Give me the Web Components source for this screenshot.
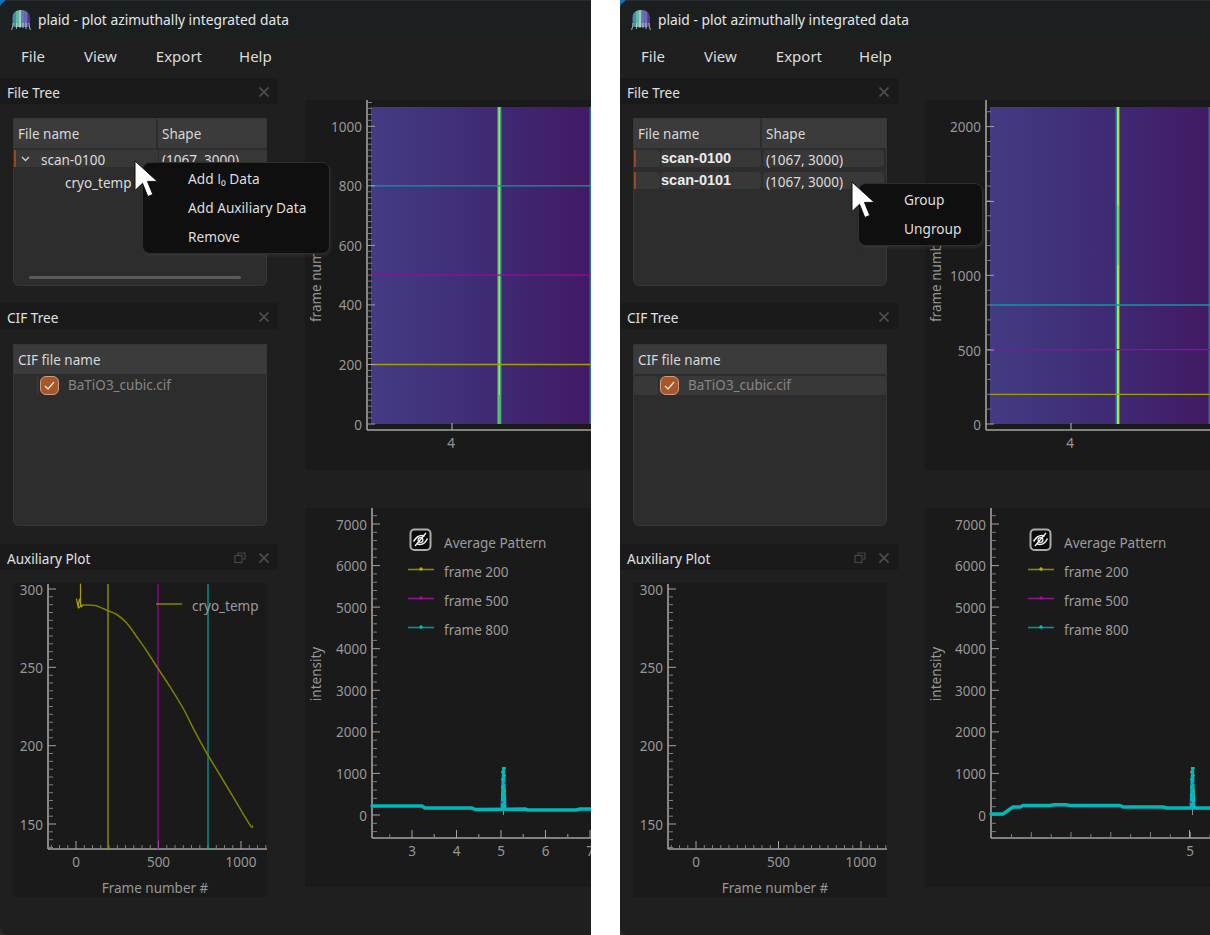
<!DOCTYPE html>
<html lang="en">
<head>
<meta charset="utf-8">
<title>plaid</title>
<style>
  html, body { margin: 0; height: 100%; background: #fff; overflow: hidden; }
  body { display: flex; gap: 29px; font-family: "Noto Sans", "Open Sans", sans-serif; }
</style>
</head>
<body>

<plaid-window style="width:591px">
  <plaid-dock slot="docks" title="File Tree" pad="14">
    <tree-view columns="File name|Shape" split="144">
      <tree-row accent chevron name="scan-0100" shape="(1067, 3000)"></tree-row>
      <tree-row child name="cryo_temp"></tree-row>
      <div slot="scroll" class="bar"></div>
    </tree-view>
  </plaid-dock>
  <plaid-dock slot="docks" title="CIF Tree" pad="15">
    <tree-view columns="CIF file name" height="182">
      <cif-row name="BaTiO3_cubic.cif"></cif-row>
    </tree-view>
  </plaid-dock>
  <plaid-dock slot="docks" title="Auxiliary Plot" floatable>
    <aux-plot data></aux-plot>
  </plaid-dock>
  <image-plot slot="plots" variant="first"></image-plot>
  <line-plot slot="plots" variant="first"></line-plot>
  <context-menu slot="overlay" items="Add I₀ Data|Add Auxiliary Data|Remove" style="left:142px;top:162px;width:188px"></context-menu>
  <mouse-cursor slot="overlay" style="left:134px;top:160px"></mouse-cursor>
</plaid-window>

<plaid-window style="width:590px">
  <plaid-dock slot="docks" title="File Tree" pad="14">
    <tree-view columns="File name|Shape" split="128">
      <tree-row accent segmented bold name="scan-0100" shape="(1067, 3000)"></tree-row>
      <tree-row accent segmented bold name="scan-0101" shape="(1067, 3000)"></tree-row>
    </tree-view>
  </plaid-dock>
  <plaid-dock slot="docks" title="CIF Tree" pad="15">
    <tree-view columns="CIF file name" height="182">
      <cif-row filled name="BaTiO3_cubic.cif"></cif-row>
    </tree-view>
  </plaid-dock>
  <plaid-dock slot="docks" title="Auxiliary Plot" floatable>
    <aux-plot></aux-plot>
  </plaid-dock>
  <image-plot slot="plots" variant="second"></image-plot>
  <line-plot slot="plots" variant="second"></line-plot>
  <context-menu slot="overlay" items="Group|Ungroup" style="left:238px;top:183px;width:125px"></context-menu>
  <mouse-cursor slot="overlay" style="left:231px;top:181px"></mouse-cursor>
</plaid-window>

<script>
const UI_FONT = `"Noto Sans", "Open Sans", sans-serif`;
const AXIS = "#a3a3a3";
const LABEL = "#979797";

// plot helpers, all coordinates are screen coordinates (the svg viewBox starts at the element's corner)
function line(x1, y1, x2, y2, color = AXIS, w = 1) {
  return `<line x1="${x1}" y1="${y1}" x2="${x2}" y2="${y2}" stroke="${color}" stroke-width="${w}"/>`;
}
function label(x, y, text, anchor = "middle", extra = "") {
  return `<text x="${x}" y="${y}" text-anchor="${anchor}" ${extra}>${text}</text>`;
}
function poly(points, color, w) {
  return `<polyline fill="none" stroke="${color}" stroke-width="${w}" stroke-linejoin="round" stroke-linecap="round" points="${points.map((p) => p.join(",")).join(" ")}"/>`;
}
// catmull-rom through the points, for the temperature curve
function smooth(points, color, w) {
  let d = `M${points[0].join(" ")}`;
  for (let i = 0; i < points.length - 1; i++) {
    const p0 = points[Math.max(i - 1, 0)];
    const p1 = points[i];
    const p2 = points[i + 1];
    const p3 = points[Math.min(i + 2, points.length - 1)];
    const c1 = [p1[0] + (p2[0] - p0[0]) / 6, p1[1] + (p2[1] - p0[1]) / 6];
    const c2 = [p2[0] - (p3[0] - p1[0]) / 6, p2[1] - (p3[1] - p1[1]) / 6];
    d += `C${c1[0].toFixed(1)} ${c1[1].toFixed(1)} ${c2[0].toFixed(1)} ${c2[1].toFixed(1)} ${p2[0]} ${p2[1]}`;
  }
  return `<path d="${d}" fill="none" stroke="${color}" stroke-width="${w}"/>`;
}
function yAxis({ x, top, bottom, y0, pxPerUnit, major, minor, base = 0 }) {
  let out = line(x, top, x, bottom, AXIS, 1.6);
  const lo = Math.ceil((y0 - bottom) / pxPerUnit / minor) * minor;
  for (let v = lo; y0 - v * pxPerUnit > top; v += minor) {
    const y = +(y0 - v * pxPerUnit).toFixed(1);
    if (y >= bottom - 1) continue;
    const value = v + base;
    const isMajor = value % major === 0;
    out += line(x, y, x + (isMajor ? 8 : 5), y, isMajor ? AXIS : "#7d7d7d", 1);
    if (isMajor && v >= 0) out += label(x - 5, y + 5.5, value, "end");
  }
  return out;
}
function pageBox(w, h) {
  return `width:${w}px;height:${h}px`;
}

class PlaidWindow extends HTMLElement {
  constructor() {
    super();
    this.attachShadow({ mode: "open" });
    this.shadowRoot.innerHTML = /*html*/ `
      <style>
        :host {
          display: block;
          position: relative;
          height: 935px;
          flex: none;
          background: linear-gradient(#1670b8, #1670b8) 0 0 / 5px 12px no-repeat, #2a2d30;
        }
        .frame {
          height: 934px;
          margin-top: 1px;
          display: flex;
          flex-direction: column;
          background: #1f1f1f;
          border-radius: 8px 0 0 8px;
          overflow: hidden;
          color: #e2e2e2;
          font: 14px ${UI_FONT};
        }
        .title {
          flex: none;
          height: 37px;
          display: flex;
          align-items: center;
          gap: 7px;
          padding-left: 11px;
          background: #1b1f20;
          color: #e4e6e6;
          font-size: 13.800px;
        }
        .title span { position: relative; top: -0.5px; }
        .menu {
          flex: none;
          height: 38px;
          display: flex;
          align-items: center;
          gap: 39px;
          padding: 0 0 3px 21px;
          box-sizing: border-box;
          font-size: 15px;
          color: #dcdcdc;
        }
        .menu span:last-child { margin-left: -2px; }
        .main { flex: 1; display: flex; min-height: 0; }
        .docks {
          flex: none;
          width: 278px;
          padding-top: 2px;
          display: grid;
          grid-template-rows: 225px 241px 1fr;
        }
        .plots {
          flex: 1;
          padding: 24px 0 0 27px;
          display: flex;
          flex-direction: column;
          gap: 38px;
          min-width: 0;
        }
      </style>
      <div class="frame">
        <div class="title">
          <svg width="20" height="22" viewBox="0 0 20 22">
            <defs><clipPath id="dome"><path d="M1 10C1 4 5 1 10 1s9 3 9 9c0 4-1 6-2 8H3c-1-2-2-4-2-8z"/></clipPath></defs>
            <g clip-path="url(#dome)">
              <rect width="20" height="19" fill="#37506e"/>
              <rect x="2" width="3" height="19" fill="#3f8fa8"/>
              <rect x="5" width="3" height="19" fill="#62b8a0"/>
              <rect x="8" width="2.500" height="19" fill="#a5c8b8"/>
              <rect x="10.500" width="3" height="19" fill="#5f78c4"/>
              <rect x="13.500" width="3" height="19" fill="#7a64b8"/>
              <rect x="16.500" width="3" height="19" fill="#4e3a8c"/>
            </g>
            <path d="M2 14c0 3-.5 5-1.500 7M5.500 14v6M9 14v5M12 14v5M15 14v6M18 14c0 3 .5 5 1.500 7" fill="none" stroke="#cfd6d0" stroke-opacity="0.700" stroke-width="1.200"/>
          </svg>
          <span>plaid - plot azimuthally integrated data</span>
        </div>
        <div class="menu"><span>File</span><span>View</span><span>Export</span><span>Help</span></div>
        <div class="main">
          <div class="docks"><slot name="docks"></slot></div>
          <div class="plots"><slot name="plots"></slot></div>
        </div>
      </div>
      <slot name="overlay"></slot>
    `;
  }
}

class PlaidDock extends HTMLElement {
  connectedCallback() {
    const pad = this.getAttribute("pad");
    const float = this.hasAttribute("floatable")
      ? `<svg class="float" width="12" height="12" viewBox="0 0 12 12" fill="none" stroke="#474747" stroke-width="1.200"><path d="M4 3V1h7v6H8.500"/><rect x="1" y="3.500" width="7" height="7"/></svg>`
      : "";
    this.attachShadow({ mode: "open" }).innerHTML = /*html*/ `
      <style>
        :host { display: block; min-height: 0; }
        .head {
          height: 26px;
          display: flex;
          align-items: center;
          padding: 2px 9px 0 7px;
          box-sizing: border-box;
          background: #1a1a1a;
          font-size: 13.600px;
          color: #e0e0e0;
        }
        .head span { flex: 1; }
        .float { margin-right: 13px; }
        .body { padding: ${pad ? pad + "px 11px 0 13px" : "0"}; }
      </style>
      <div class="head">
        <span>${this.getAttribute("title")}</span>
        ${float}
        <svg width="10" height="10" viewBox="0 0 10 10" stroke="#4c4c4c" stroke-width="1.800"><path d="M0.500 0.500l9 9M9.500 0.500l-9 9"/></svg>
      </div>
      <div class="body"><slot></slot></div>
    `;
    this.removeAttribute("title");
  }
}

class TreeView extends HTMLElement {
  connectedCallback() {
    const cols = this.getAttribute("columns").split("|");
    const split = this.getAttribute("split");
    this.attachShadow({ mode: "open" }).innerHTML = /*html*/ `
      <style>
        :host {
          display: block;
          position: relative;
          height: ${this.getAttribute("height") || 168}px;
          box-sizing: border-box;
          background: #2d2d2d;
          border: 1px solid #363636;
          border-radius: 0 0 6px 6px;
          overflow: hidden;
          --split: ${split || 0}px;
        }
        .header {
          height: 29px;
          display: flex;
          background: #3b3b3b;
          font-size: 13.500px;
          color: #d8d8d8;
          margin-bottom: 2px;
        }
        .header span { padding: 6px 0 0 4px; box-sizing: border-box; }
        .header span:not(:last-child) { width: var(--split); border-right: 2px solid #2d2d2d; flex: none; }
        .rows { display: flex; flex-direction: column; gap: 5px; }
        ::slotted(.bar) {
          position: absolute;
          left: 15px;
          bottom: 6px;
          width: 212px;
          height: 3px;
          border-radius: 2px;
          background: #5b5b5b;
        }
      </style>
      <div class="header">${cols.map((c) => `<span>${c}</span>`).join("")}</div>
      <div class="rows"><slot></slot></div>
      <slot name="scroll"></slot>
    `;
  }
}

class TreeRow extends HTMLElement {
  connectedCallback() {
    const name = this.getAttribute("name");
    const shape = this.getAttribute("shape") || "";
    const chevron = this.hasAttribute("chevron")
      ? `<svg width="9" height="6" viewBox="0 0 9 6" fill="none" stroke="#cfcfcf" stroke-width="1.300"><path d="M1 1l3.500 3.500L8 1"/></svg>`
      : "";
    this.attachShadow({ mode: "open" }).innerHTML = /*html*/ `
      <style>
        :host {
          display: grid;
          grid-template-columns: 26px calc(var(--split) - 26px) 1fr;
          height: 17px;
          line-height: 20px;
          font-size: 13.500px;
          color: #dcdcdc;
          white-space: nowrap;
        }
        .lead { display: flex; align-items: center; padding-left: 7px; box-sizing: border-box; height: 17px; }
        :host([accent]) .lead { border-left: 2px solid #94491f; padding-left: 5px; }
        .name { margin-left: -1px; height: 17px; }
        .shape { padding-left: 3px; margin-left: 1px; height: 17px; }
        :host([accent]:not([segmented])) .lead,
        :host([accent]:not([segmented])) .name,
        :host([accent]:not([segmented])) .shape { background: #383838; }
        :host([accent]:not([segmented])) .name { margin-left: 0; padding-left: 1px; }
        :host([segmented]) .lead { background: #383838; border-radius: 0 4px 4px 0; }
        :host([segmented]) .name { background: #383838; border-radius: 4px; margin: 0 1px 0 1px; }
        :host([segmented]) .shape { background: #383838; border-radius: 4px; margin-right: 2px; padding-left: 3px; }
        :host([bold]) .name {
          font-weight: 700;
          color: #ececec;
          font-family: "Liberation Sans", sans-serif;
          font-size: 14.500px;
          line-height: 17px;
        }
        :host([child]) .name { padding-left: 26px; position: relative; top: 1px; }
      </style>
      <div class="lead">${chevron}</div>
      <div class="name">${name}</div>
      <div class="shape">${shape}</div>
    `;
  }
}

class CifRow extends HTMLElement {
  connectedCallback() {
    this.attachShadow({ mode: "open" }).innerHTML = /*html*/ `
      <style>
        :host {
          display: flex;
          align-items: center;
          height: 20px;
          margin-top: -1px;
          font-size: 13.500px;
          color: #858585;
        }
        :host([filled]) .rest, :host([filled]) .lead { background: #383838; border-radius: 3px; }
        .lead { width: 23px; height: 19px; border-right: 1px solid #383838; flex: none; }
        .rest { flex: 1; display: flex; align-items: center; gap: 9px; padding-left: 1px; margin-left: 1px; height: 19px; }
        .box {
          width: 17px;
          height: 17px;
          flex: none;
          border: 1px solid #cf9e7f;
          border-radius: 6px;
          background: #a9562a;
          display: flex;
          align-items: center;
          justify-content: center;
        }
      </style>
      <div class="lead"></div>
      <div class="rest">
        <span class="box"><svg width="11" height="9" viewBox="0 0 11 9" fill="none" stroke="#f3e6dc" stroke-width="1.400"><path d="M1 5l3 3 6-7"/></svg></span>
        <span>${this.getAttribute("name")}</span>
      </div>
    `;
  }
}

class ContextMenu extends HTMLElement {
  connectedCallback() {
    const items = this.getAttribute("items").split("|");
    this.attachShadow({ mode: "open" }).innerHTML = /*html*/ `
      <style>
        :host {
          display: block;
          position: absolute;
          box-sizing: border-box;
          padding: 2px 0 1px;
          background: #0f0f0f;
          border: 1px solid #2e2e2e;
          border-radius: 8px;
          box-shadow: 1px 2px 3px rgba(70, 70, 70, 0.35);
          font-size: 13.700px;
          color: #dedede;
          z-index: 2;
        }
        div { height: 29px; line-height: 27px; padding-left: 45px; white-space: nowrap; }
        /* noto draws this I with serifs next to the subscript */
        .sub { font-family: "Open Sans", sans-serif; }
      </style>
      ${items.map((i) => `<div>${i.replace("I₀", '<span class="sub">I₀</span>')}</div>`).join("")}
    `;
  }
}

class MouseCursor extends HTMLElement {
  constructor() {
    super();
    this.attachShadow({ mode: "open" }).innerHTML = /*html*/ `
      <style>:host { display: block; position: absolute; width: 26px; height: 40px; z-index: 3; }</style>
      <svg width="26" height="40" viewBox="0 0 26 40">
        <path d="M1 1v29.500l7.500-7.200 5.300 13.200 5-2.100-5.300-13h9.800z" fill="#fff" stroke="#111" stroke-width="1"/>
      </svg>
    `;
  }
}

class ImagePlot extends HTMLElement {
  connectedCallback() {
    const first = this.getAttribute("variant") === "first";
    const ox = first ? 305 : 925;
    const w = first ? 286 : 285;
    const ax = first ? 367 : 986;
    const imgX = ax + 4;
    const peak = first ? 499 : 1118;
    const tick4 = first ? 452 : 1071;
    const right = ox + w;
    const pxPerUnit = first ? 0.2977 : 0.1487;
    const frame = (v) => +(424 - v * pxPerUnit).toFixed(1);
    const axis = yAxis({
      x: ax, top: 100, bottom: 430, y0: 424, pxPerUnit,
      major: first ? 200 : 1000, minor: first ? 20 : 100,
    });
    const extraMajors = first ? "" : line(ax, 350, ax + 8, 350) + label(ax - 5, 355.5, 500, "end")
      + line(ax, 201.5, ax + 8, 201.5);
    const core = first
      ? `<rect x="${peak - 2}" y="107" width="4.500" height="317" fill="#1f8f8b"/>
         <rect x="${peak - 0.7}" y="107" width="2" height="317" fill="#a2dc52"/>
         <rect x="${peak - 0.7}" y="395" width="2" height="29" fill="#4fc070"/>`
      : `<rect x="${peak - 2.500}" y="107" width="4.500" height="317" fill="#238a8d"/>
         <rect x="${peak - 1}" y="107" width="2" height="317" fill="#b5df3c"/>
         <rect x="${peak - 1}" y="205" width="2" height="60" fill="#7fd34e"/>`;
    this.attachShadow({ mode: "open" }).innerHTML = /*html*/ `
      <style>
        :host { display: block; ${pageBox(w, 370)}; background: #1a1a1a; }
        svg { display: block; font: 13.500px ${UI_FONT}; fill: ${LABEL}; }
      </style>
      <svg width="${w}" height="370" viewBox="${ox} 100 ${w} 370">
        <defs>
          <linearGradient id="heat">
            <stop offset="0" stop-color="#433b84"/>
            <stop offset="0.55" stop-color="#3f2a74"/>
            <stop offset="1" stop-color="#431964"/>
          </linearGradient>
        </defs>
        <rect x="${imgX}" y="107" width="${right - imgX}" height="317" fill="url(#heat)"/>
        ${core}
        <rect x="${right - 1.500}" y="107" width="1.500" height="317" fill="#2a6f9a"/>
        ${line(imgX, frame(800), right, frame(800), "#0f97a0", 1.300)}
        ${line(imgX, frame(500), right, frame(500), "#a600a6", 1.300)}
        ${line(imgX, frame(200), right, frame(200), "#a0a000", 1.300)}
        ${axis}${extraMajors}
        ${line(ax, 430, right, 430, AXIS, 1.600)}
        ${line(tick4, 423, tick4, 430, AXIS, 1.200)}
        ${label(tick4 - 1, 448, 4)}
        ${label(0, 0, "frame number", "middle", `transform="translate(${ox + 16},276) rotate(-90)"`)}
      </svg>
    `;
  }
}

class LinePlot extends HTMLElement {
  connectedCallback() {
    const first = this.getAttribute("variant") === "first";
    const ox = first ? 305 : 925;
    const w = first ? 286 : 285;
    const ax = first ? 372 : 991;
    const right = ox + w;
    const peakX = first ? 503.5 : 1192.5;
    const curve = first
      ? [[372, 806], [422, 806], [425, 808], [472, 808], [475, 809.5], [525, 809], [528, 810], [576, 810], [580, 809], [591, 809]]
      : [[991, 814], [1003, 814], [1013, 807], [1020, 807], [1023, 805.500], [1050, 805.500], [1054, 804.800], [1066, 804.800], [1070, 805.500], [1120, 805.500], [1123, 807], [1163, 807], [1167, 808], [1210, 808]];

    // scattered markers of the three frames around the peak
    let dots = "";
    const colors = ["#00c8c8", "#a3a300", "#00c8c8", "#00c8c8", "#a600a6"];
    for (let i = 0; i < 22; i += 2) {
      const y = 768 + i * 1.900;
      const dx = i % 4 === 0 ? 1.600 : -1.600;
      dots += `<circle cx="${peakX + dx}" cy="${y}" r="0.900" fill="${colors[(i / 2) % 5]}"/>`;
    }

    let xTicks = "";
    if (first) {
      [[412, "3"], [456.5, "4"], [501, "5"], [545.5, "6"], [590, "7"]].forEach(([x, t]) => {
        xTicks += line(x, 830, x, 838) + label(x, 856, t);
        if (x + 22 < right) xTicks += line(x + 22.200, 834, x + 22.200, 838, "#7d7d7d");
        xTicks += line(x - 22.200, 834, x - 22.200, 838, "#7d7d7d");
      });
    } else {
      for (let i = 0; i < 11; i++) {
        const x = +(1011.500 + i * 19.850).toFixed(1);
        xTicks += line(x, i % 2 ? 832 : 834, x, 838, i === 9 ? AXIS : "#7d7d7d");
      }
      xTicks += line(1189.500, 830, 1189.500, 838) + label(1190, 856, "5");
    }

    const legend = [["frame 200", "#85851a", "#b5b500"], ["frame 500", "#8a1a8a", "#b000b0"], ["frame 800", "#0f9090", "#00c0c0"]];
    const lx = ox + 103;
    this.attachShadow({ mode: "open" }).innerHTML = /*html*/ `
      <style>
        :host { display: block; ${pageBox(w, 379)}; background: #1a1a1a; }
        svg { display: block; font: 13.500px ${UI_FONT}; fill: ${LABEL}; }
        .legend { font-size: 13.500px; fill: #9a9a9a; }
      </style>
      <svg width="${w}" height="379" viewBox="${ox} 508 ${w} 379">
        ${yAxis({ x: ax, top: 508, bottom: 838, y0: 815, pxPerUnit: 0.04157, major: 1000, minor: 200 })}
        ${line(ax, 838, right, 838, AXIS, 1.600)}
        ${xTicks}
        ${line(peakX, 800, peakX, 815, "#8f8f8f", 1)}
        ${poly(curve, "#00b8b8", 3.500)}
        <path d="M${peakX - 3} 809L${peakX - 1.500} 767h3L${peakX + 3} 809z" fill="#00b8b8"/>
        ${dots}
        ${label(0, 0, "intensity", "middle", `transform="translate(${ox + 16},674) rotate(-90)"`)}
        <g transform="translate(${lx},0)">
          <rect x="2.500" y="529.500" width="20" height="20.500" rx="4" fill="#0b0b0b" stroke="#ababab" stroke-width="2"/>
          <path d="M5.500 541.500c2.500-4 5-6 8-6 1 0 2 .2 3 .8M19.500 538.500c-2 4-4.500 6-7.500 6-1 0-2-.2-3-.8" fill="none" stroke="#f0f0f0" stroke-width="1.500"/>
          <circle cx="12.500" cy="540" r="2.400" fill="none" stroke="#f0f0f0" stroke-width="1.200"/>
          <path d="M7 546l11-13" stroke="#f0f0f0" stroke-width="1.300"/>
          ${label(36, 548, "Average Pattern", "start", 'class="legend"')}
          ${legend.map(([t, c, d], i) => {
            const y = 569.500 + i * 29;
            return line(0, y, 26, y, c, 1.600) + `<circle cx="13" cy="${y - 0.500}" r="1.700" fill="${d}"/>` + label(36, y + 7.500, t, "start", 'class="legend"');
          }).join("")}
        </g>
      </svg>
    `;
  }
}

class AuxPlot extends HTMLElement {
  connectedCallback() {
    const withData = this.hasAttribute("data");
    const pxX = 0.165;
    const x0 = 76;
    let xTicks = "";
    for (let v = -150; x0 + v * pxX < 268; v += 50) {
      const x = +(x0 + v * pxX).toFixed(1);
      const major = v % 500 === 0;
      xTicks += line(x, major ? 841 : 845, x, 849, major ? AXIS : "#7d7d7d");
      if (major) xTicks += label(x, 867, v);
    }
    const data = withData ? `
      ${line(108, 584, 108, 849, "#a3a300", 1.200)}
      ${line(158, 584, 158, 849, "#a600a6", 1.200)}
      ${line(208, 584, 208, 849, "#0fa0a0", 1.200)}
      ${poly([[80.500, 584], [80.500, 606], [78.500, 608], [76.500, 599], [78, 607], [79.500, 599], [81.500, 607], [83, 605]], "#a3a300", 1.200)}
      ${smooth([[83, 605], [95, 605.500], [108, 610.700], [116.700, 614.500], [126.700, 623], [136.700, 636.700], [146.700, 651], [158.300, 669], [170, 686.700], [183, 708], [195, 731.700], [206.700, 753], [220, 775], [233, 796.700], [250, 825], [253, 825.500]], "#7f7f00", 1.500)}
      ${line(156, 604, 182, 604, "#7f7f00", 1.600)}
      <text x="192" y="611" class="legend">cryo_temp</text>` : "";
    this.attachShadow({ mode: "open" }).innerHTML = /*html*/ `
      <style>
        :host { display: block; ${pageBox(278, 365)}; }
        svg { display: block; font: 13.500px ${UI_FONT}; fill: ${LABEL}; }
        .legend { font-size: 13.500px; fill: #9a9a9a; }
      </style>
      <svg width="278" height="365" viewBox="0 570 278 365">
        <rect x="13" y="583" width="254" height="314" fill="#1a1a1a"/>
        ${yAxis({ x: 48, top: 584, bottom: 849, y0: 824, pxPerUnit: 1.5667, major: 50, minor: 5, base: 150 })}
        ${line(48, 849, 267, 849, AXIS, 1.600)}
        ${xTicks}
        ${data}
        ${label(155, 893, "Frame number #")}
      </svg>
    `;
  }
}

customElements.define("plaid-window", PlaidWindow);
customElements.define("plaid-dock", PlaidDock);
customElements.define("tree-view", TreeView);
customElements.define("tree-row", TreeRow);
customElements.define("cif-row", CifRow);
customElements.define("context-menu", ContextMenu);
customElements.define("mouse-cursor", MouseCursor);
customElements.define("image-plot", ImagePlot);
customElements.define("line-plot", LinePlot);
customElements.define("aux-plot", AuxPlot);
</script>
</body>
</html>
